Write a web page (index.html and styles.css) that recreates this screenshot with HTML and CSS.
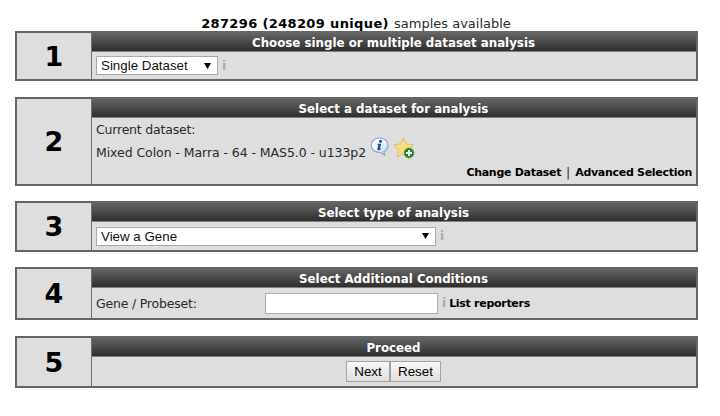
FILE: index.html
```html
<!DOCTYPE html>
<html lang="en">
<head>
<meta charset="utf-8">
<title>Dataset analysis</title>
<link rel="stylesheet" href="styles.css">
</head>
<body>
<p class="summary"><b>287296 (248209 unique)</b> samples available</p>
<main class="steps">
  <section class="step step-1">
    <div class="number">1</div>
    <div class="content">
      <h2>Choose single or multiple dataset analysis</h2>
      <div class="row">
        <div class="select select-short"><span>Single Dataset</span><svg class="arrow" viewBox="0 0 7 6"><path d="M0 0h7L3.5 6z"/></svg></div>
        <span class="hint">i</span>
      </div>
    </div>
  </section>
  <section class="step step-2">
    <div class="number">2</div>
    <div class="content">
      <h2>Select a dataset for analysis</h2>
      <div class="dataset">
        <div class="label">Current dataset:</div>
        <div class="current">
          <span class="name">Mixed Colon - Marra - 64 - MAS5.0 - u133p2</span>
          <svg class="info" viewBox="0 0 20 20">
            <defs><linearGradient id="bubble" x2="1" y2="1"><stop stop-color="#fff"/><stop offset=".55" stop-color="#edf6ff"/><stop offset="1" stop-color="#9cc7ef"/></linearGradient></defs>
            <path d="M9.500 1C14.500 1 18 4 18 8.300c0 3-1.500 5-4 6.200l.6 3.700-4.200-2.900C5 15.500 1.300 12.500 1.300 8.200 1.300 4 4.800 1 9.500 1z" fill="url(#bubble)" stroke="#86a9c8" stroke-width="1.200"/>
            <circle cx="10.500" cy="4.200" r="1.500" fill="#174b9b"/>
            <path d="M7.500 6.700h3.700l-1.300 5.100 1.400-.3-.3 1c-2 1.200-4 .9-3.600-.8l1-3.900H7.200z" fill="#174b9b"/>
          </svg>
          <svg class="star" viewBox="0 0 22 22">
            <path d="M10.500 1.200l2.700 5.700 7.600.9-5.300 5 1.200 7-6.200-3.200-6.200 3.200 1.200-6.700L.8 7.800l6.800-1z" fill="#fbdc82" stroke="#dcb45b" stroke-width=".8" stroke-linejoin="round"/>
            <circle cx="16" cy="16" r="5" fill="#23852b" stroke="#62a45e" stroke-width=".8"/>
            <path d="M16 13v6M13 16h6" stroke="#fff" stroke-width="1.900"/>
          </svg>
        </div>
        <div class="actions"><b>Change Dataset</b><span class="bar">|</span><b>Advanced Selection</b></div>
      </div>
    </div>
  </section>
  <section class="step step-3">
    <div class="number">3</div>
    <div class="content">
      <h2>Select type of analysis</h2>
      <div class="row">
        <div class="select select-long"><span>View a Gene</span><svg class="arrow" viewBox="0 0 7 6"><path d="M0 0h7L3.500 6z"/></svg></div>
        <span class="hint">i</span>
      </div>
    </div>
  </section>
  <section class="step step-4">
    <div class="number">4</div>
    <div class="content">
      <h2>Select Additional Conditions</h2>
      <div class="row">
        <label class="label gene" for="gene">Gene / Probeset:</label>
        <input id="gene" type="text">
        <span class="hint">i</span>
        <b class="reporters">List reporters</b>
      </div>
    </div>
  </section>
  <section class="step step-5">
    <div class="number">5</div>
    <div class="content">
      <h2>Proceed</h2>
      <div class="row buttons"><button class="next">Next</button><button class="reset">Reset</button></div>
    </div>
  </section>
</main>
</body>
</html>
```
FILE: styles.css
```css
* { box-sizing: border-box; }
body {
  margin: 0;
  background: #fff;
  color: #2a2a2a;
  font: 12.5px "DejaVu Sans", sans-serif;
}
.summary {
  margin: 0;
  padding: 16px 8px 0 0;
  height: 31px;
  line-height: 15px;
  font-size: 13px;
  text-align: center;
  white-space: nowrap;
}
.summary b { margin-right: 1px; color: #000; letter-spacing: .36px; }
.steps { width: 683px; margin-left: 15px; }
.step {
  display: grid;
  grid-template-columns: 75px 1fr;
  border: 2px solid #666;
  background: #dedede;
}
.step-1 { height: 50px; margin-bottom: 16px; }
.step-2 { height: 89px; margin-bottom: 15px; }
.step-3 { height: 51px; margin-bottom: 15px; }
.step-4 { height: 53px; margin-bottom: 16px; }
.step-5 { height: 52px; }
.number {
  display: flex;
  align-items: center;
  justify-content: center;
  border-right: 1px solid #707070;
  color: #000;
  font-size: 27px;
  font-weight: bold;
}
.content { display: flex; flex-direction: column; min-width: 0; }
h2 {
  flex: none;
  height: 19px;
  margin: 0;
  padding: 1px 1px 0 0;
  border-bottom: 1px solid #808080;
  background: linear-gradient(#646464, #2e2e2e);
  color: #fff;
  font: bold 13.15px/18px "DejaVu Sans Condensed", "DejaVu Sans", sans-serif;
  text-align: center;
}
.row { flex: 1; display: flex; align-items: center; padding-left: 4px; }
.select {
  display: flex;
  align-items: center;
  justify-content: space-between;
  height: 19px;
  padding: 0 6px 0 4px;
  border: 1px solid #a9a9a9;
  background: #fff;
  color: #111;
  font: 13.33px "Liberation Sans", sans-serif;
}
.select-short { width: 122px; }
.select-long { width: 340px; }
.arrow { width: 7px; height: 6px; fill: #000; }
.hint {
  margin-left: 4px;
  color: #aaa;
  font-size: 12px;
  font-weight: bold;
}
.label { letter-spacing: -.2px; }
.dataset { display: flex; flex: 1; flex-direction: column; padding: 5px 4px 0 4px; }
.dataset .label { height: 14px; line-height: 14px; }
.current { display: flex; height: 28px; }
.name { padding-top: 8px; line-height: 16px; letter-spacing: -.07px; white-space: nowrap; }
.info { width: 20px; height: 20px; margin: 0 0 0 4px; }
.star { width: 22px; height: 22px; margin-left: 3px; }
.actions { display: flex; justify-content: flex-end; line-height: 15px; }
.actions b, .reporters {
  color: #000;
  font: bold 11px/15px "DejaVu Sans", sans-serif;
  letter-spacing: -.29px;
}
.bar { width: 14px; text-align: center; }
.gene { width: 169px; }
input {
  width: 173px;
  height: 21px;
  padding: 0 4px;
  border: 1px solid #adadad;
  background: #fff;
}
.reporters { margin-left: 3px; padding-top: 1px; }
.buttons { justify-content: center; padding: 0 1px 0 0; }
button {
  height: 21px;
  padding: 0;
  border: 1px solid #a3a3a3;
  background: linear-gradient(#f8f8f8, #dedede);
  color: #000;
  font: 13.4px "Liberation Sans", sans-serif;
}
.next { width: 44px; }
.reset { width: 51px; }
```
